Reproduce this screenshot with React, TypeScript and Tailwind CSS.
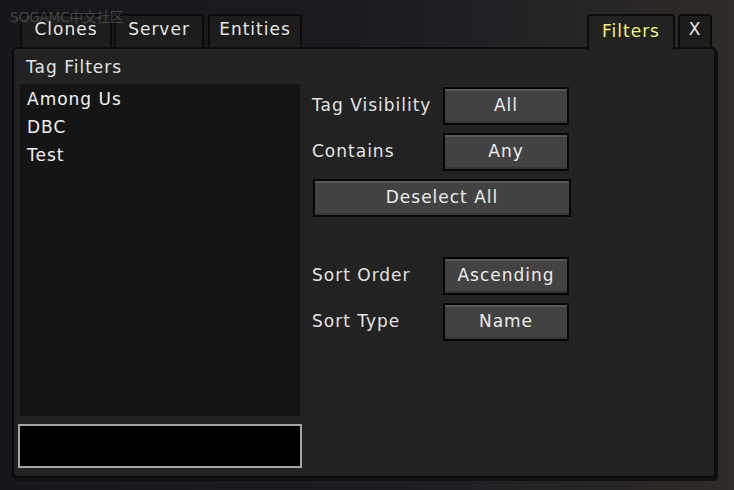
const font = { fontFamily: '"DejaVu Sans", "Noto Sans CJK SC", sans-serif' };

const Tab = ({ label, width, active = false }: { label: string; width: string; active?: boolean }) => (
  <div
    className={`${width} flex items-start justify-center rounded-t-[4px] border-2 border-b-0 border-[#0b0b0b] ${
      active
        ? "relative z-10 -mb-[3px] h-[36px] bg-[#222222] pt-[3px] text-[#f3f37a]"
        : "h-[33px] bg-[#1c1c1c] pt-[1px] text-[#e6e6e6]"
    }`}
  >
    <span className="text-[17px] leading-[24px] tracking-[1px]">{label}</span>
  </div>
);

const McButton = ({ label, width = "w-[126px]" }: { label: string; width?: string }) => (
  <button className={`${width} h-[38px] border-2 border-[#050505] bg-[#424242] shadow-[inset_0_2px_0_#575757,inset_0_-2px_0_#353535] text-[17px] tracking-[1px] text-[#ececec]`}>
    {label}
  </button>
);

const Row = ({ label, value }: { label: string; value: string }) => (
  <div className="flex items-center">
    <span className="w-[131px] text-[17px] tracking-[1px] text-[#e2e2e2]">{label}</span>
    <McButton label={value} />
  </div>
);

export default function App() {
  return (
    <div
      className="relative h-[490px] w-[734px] overflow-hidden bg-gradient-to-r from-[#16161b] via-[#1b1b22] to-[#2f2b27] pt-[14px] pl-[12px]"
      style={font}
    >
      {/* watermark, drawn over the tabs */}
      <div className="absolute left-[10px] top-[7px] z-20 text-[14px] tracking-[-0.5px] text-[#5a5a5e]/70">SOGAMC中文社区</div>

      <div className="flex w-[704px] items-start">
        <div className="ml-[8px] flex gap-[2px]">
          <Tab label="Clones" width="w-[92px]" />
          <Tab label="Server" width="w-[90px]" />
          <div className="ml-[2px]">
            <Tab label="Entities" width="w-[94px]" />
          </div>
        </div>
        <div className="ml-auto mr-[4px] flex items-start gap-[3px]">
          <Tab label="Filters" width="w-[88px]" active />
          <Tab label="X" width="w-[34px]" />
        </div>
      </div>

      <div className="flex h-[431px] w-[704px] rounded-[4px] border-2 border-[#0b0b0b] bg-[#222222] shadow-[2px_3px_0_#101010]">
        <div className="flex w-[292px] flex-col pl-[4px] pt-[9px]">
          <div className="pl-[8px] text-[17px] leading-[18px] tracking-[1px] text-[#e2e2e2]">Tag Filters</div>
          <div className="ml-[2px] mt-[8px] flex h-[332px] w-[280px] flex-col bg-[#151515] pl-[7px] pt-[1px] text-[17px] leading-[28px] tracking-[1px] text-[#f2f2f2]">
            <span>Among Us</span>
            <span>DBC</span>
            <span>Test</span>
          </div>
          <div className="mt-[8px] h-[44px] w-[284px] border-2 border-[#a5a5a5] bg-black" />
        </div>

        <div className="flex flex-col pl-[6px] pt-[38px]">
          <div className="flex flex-col gap-[8px]">
            <Row label="Tag Visibility" value="All" />
            <Row label="Contains" value="Any" />
            <div className="pl-[1px]">
              <McButton label="Deselect All" width="w-[258px]" />
            </div>
          </div>
          <div className="mt-[40px] flex flex-col gap-[8px]">
            <Row label="Sort Order" value="Ascending" />
            <Row label="Sort Type" value="Name" />
          </div>
        </div>
      </div>
    </div>
  );
}
